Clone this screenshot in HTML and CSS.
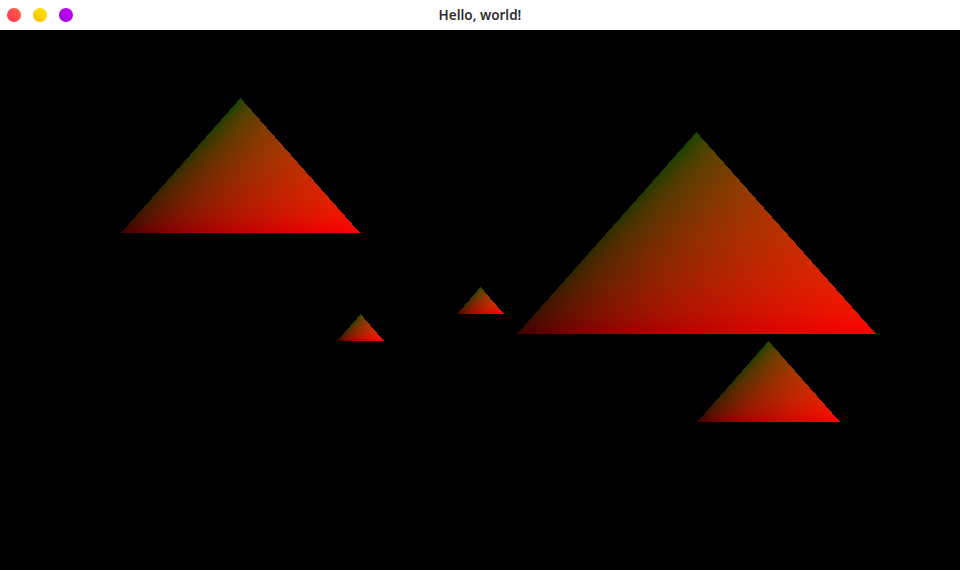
FILE: index.html
```html
<!DOCTYPE html>
<html>
<head>
<meta charset="utf-8">
<title>Hello, world!</title>
<link rel="stylesheet" href="styles.css">
</head>
<body>
<svg class="defs" width="0" height="0" aria-hidden="true">
  <defs>
    <linearGradient id="gr" x1="0.5" y1="0" x2="1.305" y2="0.434">
      <stop offset="0" stop-color="rgb(25,0,0)"/>
      <stop offset="0.05" stop-color="rgb(69,0,0)"/>
      <stop offset="0.1" stop-color="rgb(93,0,0)"/>
      <stop offset="0.2" stop-color="rgb(126,0,0)"/>
      <stop offset="0.3" stop-color="rgb(151,0,0)"/>
      <stop offset="0.4" stop-color="rgb(171,0,0)"/>
      <stop offset="0.5" stop-color="rgb(188,0,0)"/>
      <stop offset="0.6" stop-color="rgb(204,0,0)"/>
      <stop offset="0.7" stop-color="rgb(218,0,0)"/>
      <stop offset="0.8" stop-color="rgb(231,0,0)"/>
      <stop offset="0.9" stop-color="rgb(243,0,0)"/>
      <stop offset="1" stop-color="rgb(255,0,0)"/>
    </linearGradient>
    <linearGradient id="gg" x1="0" y1="0" x2="0" y2="1">
      <stop offset="0" stop-color="rgb(0,69,0)"/>
      <stop offset="0.25" stop-color="rgb(0,60,0)"/>
      <stop offset="0.5" stop-color="rgb(0,48,0)"/>
      <stop offset="0.75" stop-color="rgb(0,33,0)"/>
      <stop offset="0.9" stop-color="rgb(0,18,0)"/>
      <stop offset="1" stop-color="rgb(0,0,0)"/>
    </linearGradient>
  </defs>
</svg>
<div class="window">
  <header class="titlebar">
    <div class="buttons">
      <span class="dot dot-close"></span>
      <span class="dot dot-min"></span>
      <span class="dot dot-max"></span>
    </div>
    <div class="title">Hello, world!</div>
  </header>
  <main class="canvas">
    <svg class="tri t1" viewBox="0 0 1 1" preserveAspectRatio="none"><polygon class="r" points="0.5,0 0,1 1,1"/><polygon class="g" points="0.5,0 0,1 1,1"/></svg>
    <svg class="tri t2" viewBox="0 0 1 1" preserveAspectRatio="none"><polygon class="r" points="0.5,0 0,1 1,1"/><polygon class="g" points="0.5,0 0,1 1,1"/></svg>
    <svg class="tri t3" viewBox="0 0 1 1" preserveAspectRatio="none"><polygon class="r" points="0.5,0 0,1 1,1"/><polygon class="g" points="0.5,0 0,1 1,1"/></svg>
    <svg class="tri t4" viewBox="0 0 1 1" preserveAspectRatio="none"><polygon class="r" points="0.5,0 0,1 1,1"/><polygon class="g" points="0.5,0 0,1 1,1"/></svg>
    <svg class="tri t5" viewBox="0 0 1 1" preserveAspectRatio="none"><polygon class="r" points="0.5,0 0,1 1,1"/><polygon class="g" points="0.5,0 0,1 1,1"/></svg>
  </main>
</div>
</body>
</html>
```

FILE: styles.css
```css
html, body {
  margin: 0;
  padding: 0;
  background: #ffffff;
}
.defs {
  position: absolute;
  width: 0;
  height: 0;
}
.window {
  width: 960px;
  height: 570px;
  display: flex;
  flex-direction: column;
  overflow: hidden;
}
.titlebar {
  height: 30px;
  flex: 0 0 30px;
  background: #ffffff;
  display: flex;
  align-items: center;
  position: relative;
  border-radius: 6px 6px 0 0;
}
.buttons {
  display: flex;
  gap: 12px;
  padding-left: 7px;
}
.dot {
  width: 14px;
  height: 14px;
  border-radius: 50%;
  display: block;
}
.dot-close {
  background: linear-gradient(45deg, #ff3355 0%, #ff4b4b 50%, #ff6640 100%);
}
.dot-min {
  background: linear-gradient(45deg, #f2b800 0%, #ffd400 50%, #ffe600 100%);
}
.dot-max {
  background: linear-gradient(45deg, #9900dd 0%, #b400ee 50%, #cc00ff 100%);
}
.title {
  position: absolute;
  left: 0;
  right: 0;
  top: 0;
  height: 30px;
  line-height: 30px;
  text-align: center;
  font-family: "Noto Sans", "Open Sans", sans-serif;
  font-weight: 600;
  font-size: 13.5px;
  color: #2e2e33;
  pointer-events: none;
}
.canvas {
  flex: 1;
  background: #000000;
  position: relative;
  isolation: isolate;
}
.tri {
  position: absolute;
  display: block;
  overflow: visible;
  isolation: isolate;
}
.tri polygon {
  shape-rendering: crispEdges;
}
.tri .r {
  fill: url(#gr);
}
.tri .g {
  fill: url(#gg);
  mix-blend-mode: lighten;
}
.t1 { left: 121px; top: 68px; width: 239px; height: 135px; }
.t2 { left: 517px; top: 102px; width: 359px; height: 202px; }
.t3 { left: 337px; top: 284px; width: 47px; height: 27px; }
.t4 { left: 457px; top: 257px; width: 47px; height: 27px; }
.t5 { left: 697px; top: 311px; width: 143px; height: 81px; }
```
